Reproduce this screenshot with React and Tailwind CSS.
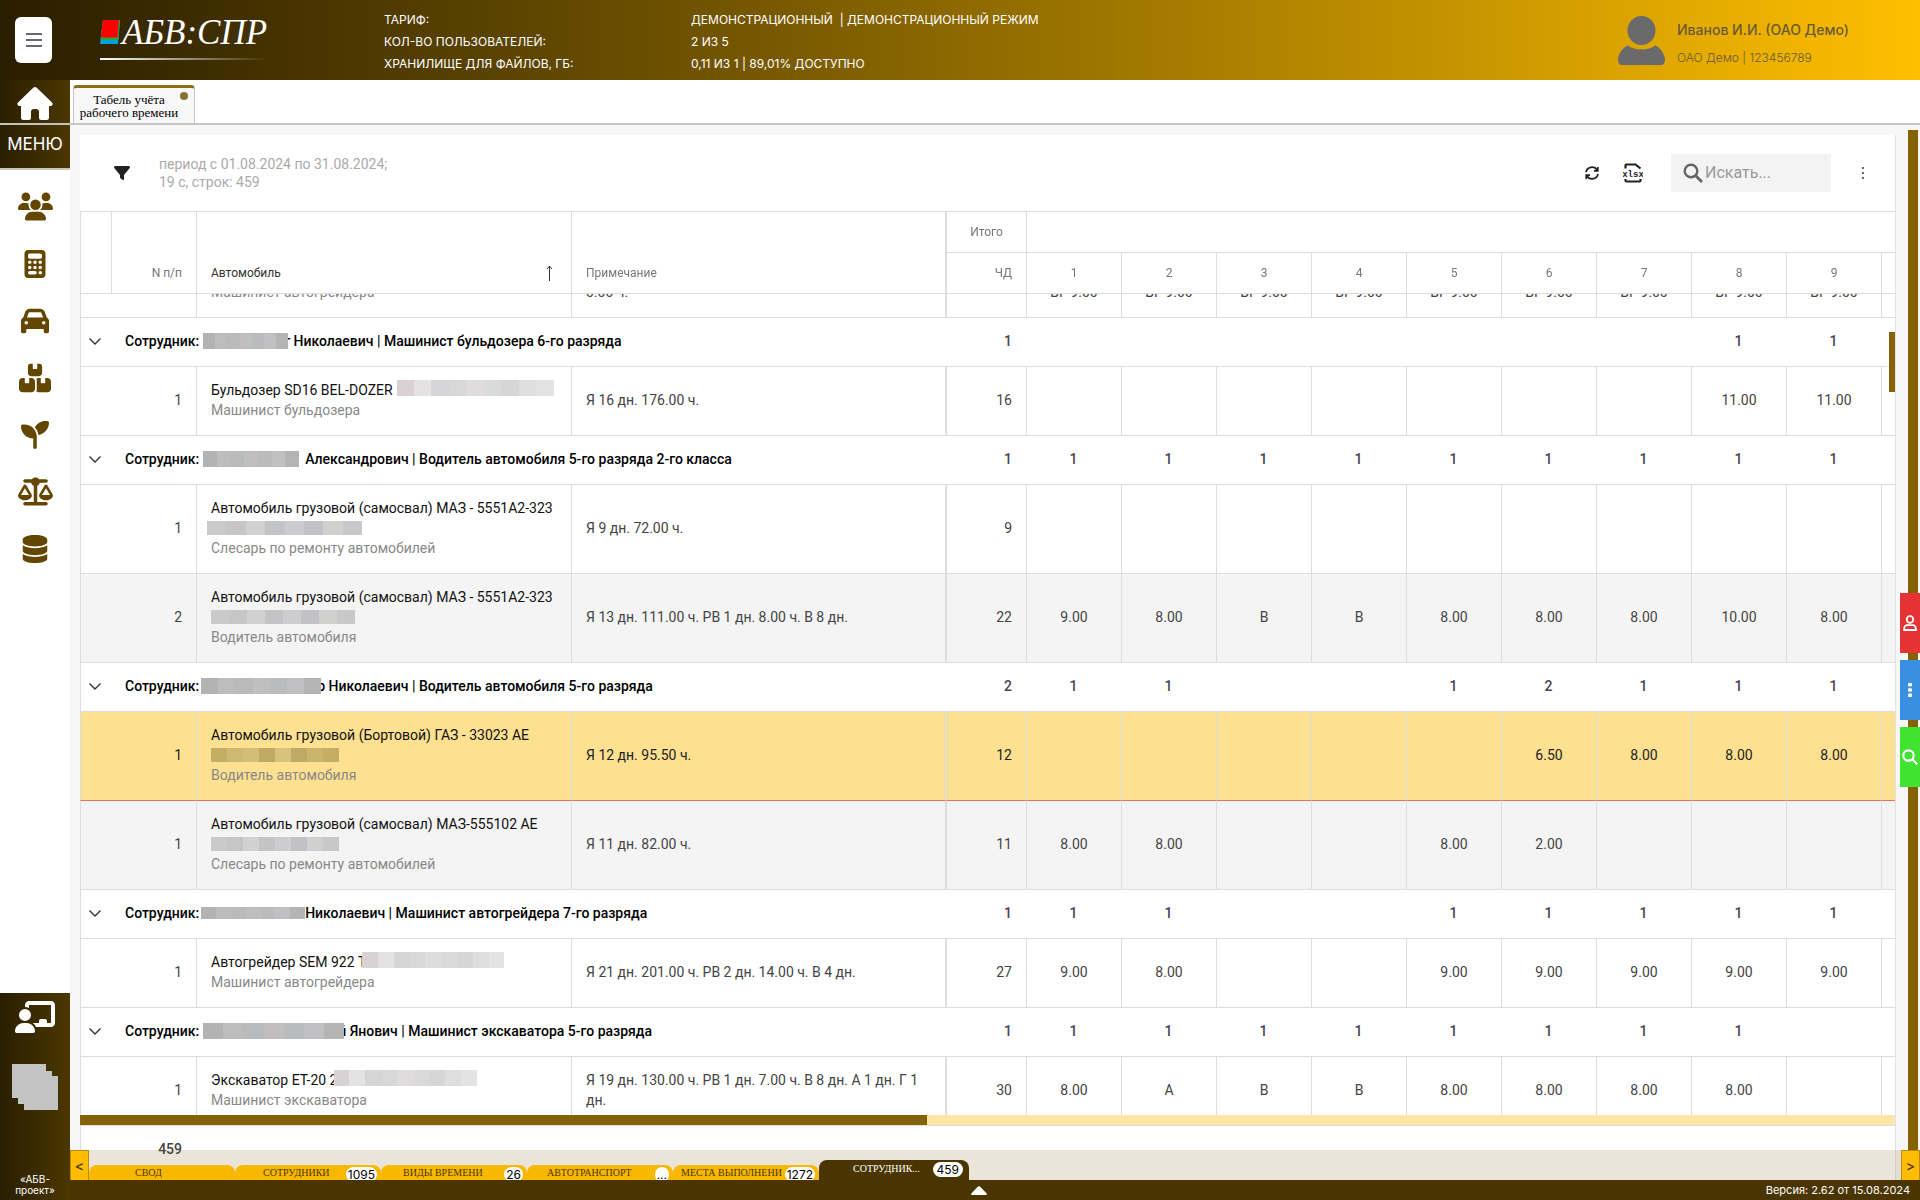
import { useLayoutEffect, useRef } from 'react';
import clsx from 'clsx';
import {
    FaBoxesStacked,
    FaCalculator,
    FaCar,
    FaChalkboardUser,
    FaDatabase,
    FaFilter,
    FaScaleBalanced,
    FaSeedling,
    FaUsers,
} from 'react-icons/fa6';

const MENU = [
    { title: 'Сотрудники', Icon: FaUsers, size: 35 },
    { title: 'Расчёты', Icon: FaCalculator, size: 28 },
    { title: 'Автотранспорт', Icon: FaCar, size: 28 },
    { title: 'Склад', Icon: FaBoxesStacked, size: 32 },
    { title: 'Растения', Icon: FaSeedling, size: 28 },
    { title: 'Баланс', Icon: FaScaleBalanced, size: 35 },
    { title: 'Справочники', Icon: FaDatabase, size: 28 },
];

const TARIFF = [
    ['ТАРИФ:', 'ДЕМОНСТРАЦИОННЫЙ \u00a0| ДЕМОНСТРАЦИОННЫЙ РЕЖИМ'],
    ['КОЛ-ВО ПОЛЬЗОВАТЕЛЕЙ:', '2 ИЗ 5'],
    ['ХРАНИЛИЩЕ ДЛЯ ФАЙЛОВ, ГБ:', '0,11 ИЗ 1 | 89,01% ДОСТУПНО'],
];

const DAYS = ['1', '2', '3', '4', '5', '6', '7', '8', '9'];

const GRAY = ['#b3b3b3', '#bdbdbd', '#b8babb', '#c1bebf', '#b9bbbc', '#c0bfc1', '#b4b4b4'];
const LIGHT = ['#d8d2d4', '#e4e2e3', '#d5d4d6', '#d8d8d9', '#e0dcde', '#dadadb', '#d6d5d8', '#dedede', '#e3e3e3'];
const MIDDLE = ['#cbcacb', '#c7c5c6', '#d2d1d2', '#c3c4c6', '#cdccce', '#c2c2c6', '#d0d0cf', '#c8c8ca'];
const SAND = ['#c4ae66', '#cfb972', '#d3be78', '#bfa963', '#d9c37c', '#bfaa65', '#cbb56d', '#c5ad65'];

const ROWS = [
    {
        type: 'row', n: '', car: '', post: 'Машинист автогрейдера', note: ['\u00a0', '0.00 ч.'], total: '',
        days: ['ВГ 9.00', 'ВГ 9.00', 'ВГ 9.00', 'ВГ 9.00', 'ВГ 9.00', 'ВГ 9.00', 'ВГ 9.00', 'ВГ 9.00', 'ВГ 9.00'],
        lowered: true,
    },
    {
        type: 'group', mosaic: 'w-[85px] h-4 ml-1 -mr-1', name: 'г Николаевич', post: 'Машинист бульдозера 6-го разряда',
        total: '1', days: ['', '', '', '', '', '', '', '1', '1'],
    },
    {
        type: 'row', n: '1', car: 'Бульдозер SD16 BEL-DOZER', inline: 'w-[157px] ml-1', post: 'Машинист бульдозера',
        note: ['Я 16 дн. 176.00 ч.'], total: '16', days: ['', '', '', '', '', '', '', '11.00', '11.00'],
    },
    {
        type: 'group', mosaic: 'w-24 h-4 ml-1 mr-1.5', name: 'Александрович', post: 'Водитель автомобиля 5-го разряда 2-го класса',
        total: '1', days: ['1', '1', '1', '1', '1', '1', '1', '1', '1'],
    },
    {
        type: 'row', tall: true, n: '1', car: 'Автомобиль грузовой (самосвал) МАЗ - 5551А2-323', below: 'w-[155px] -ml-1', colors: MIDDLE,
        post: 'Слесарь по ремонту автомобилей', note: ['Я 9 дн. 72.00 ч.'], total: '9', days: ['', '', '', '', '', '', '', '', ''],
    },
    {
        type: 'row', tall: true, odd: true, n: '2', car: 'Автомобиль грузовой (самосвал) МАЗ - 5551А2-323', below: 'w-36', colors: MIDDLE,
        post: 'Водитель автомобиля', note: ['Я 13 дн. 111.00 ч. РВ 1 дн. 8.00 ч. В 8 дн.'], total: '22',
        days: ['9.00', '8.00', 'В', 'В', '8.00', '8.00', '8.00', '10.00', '8.00'],
    },
    {
        type: 'group', mosaic: 'w-[120px] h-4 ml-0.5 -mr-1', name: 'р Николаевич', post: 'Водитель автомобиля 5-го разряда',
        total: '2', days: ['1', '1', '', '', '1', '2', '1', '1', '1'],
    },
    {
        type: 'row', tall: true, selected: true, n: '1', car: 'Автомобиль грузовой (Бортовой) ГАЗ - 33023 АЕ', below: 'w-32', colors: SAND,
        post: 'Водитель автомобиля', note: ['Я 12 дн. 95.50 ч.'], total: '12', days: ['', '', '', '', '', '6.50', '8.00', '8.00', '8.00'],
    },
    {
        type: 'row', tall: true, odd: true, afterSelected: true, n: '1', car: 'Автомобиль грузовой (самосвал) МАЗ-555102 АЕ', below: 'w-32', colors: MIDDLE,
        post: 'Слесарь по ремонту автомобилей', note: ['Я 11 дн. 82.00 ч.'], total: '11', days: ['8.00', '8.00', '', '', '8.00', '2.00', '', '', ''],
    },
    {
        type: 'group', mosaic: 'w-[104px] h-3 ml-0.5', name: 'Николаевич', post: 'Машинист автогрейдера 7-го разряда',
        total: '1', days: ['1', '1', '', '', '1', '1', '1', '1', '1'],
    },
    {
        type: 'row', n: '1', car: 'Автогрейдер SEM 922 Т', inline: 'w-[142px] -ml-1', post: 'Машинист автогрейдера',
        note: ['Я 21 дн. 201.00 ч. РВ 2 дн. 14.00 ч. В 4 дн.'], total: '27',
        days: ['9.00', '8.00', '', '', '9.00', '9.00', '9.00', '9.00', '9.00'],
    },
    {
        type: 'group', mosaic: 'w-[141px] h-4 ml-1 -mr-1.5', name: 'й Янович', post: 'Машинист экскаватора 5-го разряда',
        total: '1', days: ['1', '1', '1', '1', '1', '1', '1', '1', ''],
    },
    {
        type: 'row', n: '1', car: 'Экскаватор ЕТ-20 2', inline: 'w-[143px] -ml-1', post: 'Машинист экскаватора',
        note: ['Я 19 дн. 130.00 ч. РВ 1 дн. 7.00 ч. В 8 дн. А 1 дн. Г 1', 'дн.'], total: '30',
        days: ['8.00', 'А', 'В', 'В', '8.00', '8.00', '8.00', '8.00', ''],
    },
];

const SHEETS = [
    { title: 'СВОД', pad: 'pl-[46px]' },
    { title: 'СОТРУДНИКИ', count: '1095', pad: 'pl-7' },
    { title: 'ВИДЫ ВРЕМЕНИ', count: '26', pad: 'pl-[22px]' },
    { title: 'АВТОТРАНСПОРТ', count: '...', pad: 'pl-5' },
    { title: 'МЕСТА ВЫПОЛНЕНИ', count: '1272', pad: 'pl-2' },
];

function Mosaic({ className, colors }) {
    return (
        <span className={clsx('relative inline-flex shrink-0', className)}>
            {colors.map((color, i) => (
                <span key={i} className="flex-1" style={{ backgroundColor: color }} />
            ))}
        </span>
    );
}

function HouseIcon() {
    return (
        <svg width="36" height="33" viewBox="0 0 36 33" fill="#fff">
            <path d="M16 1a3 3 0 0 1 4 0L35 15.500c1.300 1.300.6 3.500-1.300 3.500H32v11.500a2.500 2.500 0 0 1-2.500 2.500H24a2 2 0 0 1-2-2v-6a3 3 0 0 0-3-3h-2a3 3 0 0 0-3 3v6a2 2 0 0 1-2 2H6.500A2.500 2.500 0 0 1 4 30.500V19H2.300C.4 19-.3 16.800 1 15.500z" />
        </svg>
    );
}

function Logo() {
    return (
        <a href="#" className="flex w-[170px] flex-col">
            <span className="flex h-[38px] items-start">
                <svg width="20" height="24" viewBox="0 0 20 24">
                    <path d="M3 0h17l-2 24H0z" fill="#00a3d9" />
                    <path d="M3 0h17l-1.600 20H.5z" fill="#22a83c" />
                    <path d="M3 0h16l-1.500 17.500H.8z" fill="#f00" />
                </svg>
                <span className="ml-0.5 font-['Liberation_Serif'] text-[35px] leading-[26px] text-white italic">АБВ:СПР</span>
            </span>
            <span className="h-0.5 bg-linear-to-r from-white to-transparent" />
        </a>
    );
}

function Header() {
    return (
        <header className="flex h-20 shrink-0 items-center bg-linear-to-r from-[#2a1e00] to-[#ffbf00] font-['Inter'] text-white">
            <button type="button" aria-label="Меню" className="ml-[15px] flex h-[46px] w-[37px] flex-col items-center justify-center gap-1 rounded-md bg-white">
                <span className="h-0.5 w-4 bg-[#666a70]" />
                <span className="h-0.5 w-4 bg-[#666a70]" />
                <span className="h-0.5 w-4 bg-[#666a70]" />
            </button>
            <div className="ml-12">
                <Logo />
            </div>
            <dl className="ml-[114px] pt-1 text-xs leading-[22px]">
                {TARIFF.map(([label, value]) => (
                    <div key={label} className="flex">
                        <dt className="w-[307px]">{label}</dt>
                        <dd>{value}</dd>
                    </div>
                ))}
            </dl>
            <div className="mr-[67px] ml-auto flex items-center gap-3 text-[#6b5a34]">
                <svg width="47" height="49" viewBox="0 0 47 49" fill="#6a6a6a">
                    <ellipse cx="23.500" cy="14.500" rx="14" ry="14.500" />
                    <path d="M10 29.500c3 2.500 8 4 13.500 4s10.500-1.500 13.500-4c6 2.500 10 9 10 14.500 0 3-1.500 5-4.500 5h-38C1.500 49 0 47 0 44c0-5.500 4-12 10-14.500z" />
                </svg>
                <div className="w-44 pt-2">
                    <p className="text-sm leading-7 font-medium">Иванов И.И. (ОАО Демо)</p>
                    <p className="text-xs leading-7 font-light">ОАО Демо | 123456789</p>
                </div>
            </div>
        </header>
    );
}

function Sidebar() {
    return (
        <aside className="flex w-[70px] shrink-0 flex-col bg-white font-['Inter']">
            <a href="#" aria-label="На главную" className="flex h-[45px] items-center justify-center border-b-2 border-[#c5c2bb] bg-linear-to-r from-[#2a1e00] to-[#4c3800] pt-1">
                <HouseIcon />
            </a>
            <button type="button" className="h-[45px] border-b-2 border-[#c9c5bd] bg-linear-to-r from-[#2a1e00] to-[#4c3800] pb-1 text-[17px] text-white">
                МЕНЮ
            </button>
            <nav className="mt-2 flex flex-col">
                {MENU.map(({ title, Icon, size }) => (
                    <a key={title} href="#" aria-label={title} className="flex h-[57px] items-center justify-center text-[#634600]">
                        <Icon size={size} />
                    </a>
                ))}
            </nav>
            <div className="mt-auto flex h-[207px] flex-col items-center bg-linear-to-r from-[#2a1e00] to-[#4c3800] text-white">
                <FaChalkboardUser size={40} className="mt-1" />
                <svg width="46" height="46" viewBox="0 0 46 46" fill="#c3c3c3" className="mt-[27px]">
                    <path d="M0 0h34v7h6v5h6v34H12v-6H6v-6H0z" />
                </svg>
                <p className="mt-auto mb-1 text-center text-[10px] leading-[11px]">
                    «АБВ-
                    <br />
                    проект»
                </p>
            </div>
        </aside>
    );
}

function TabBar() {
    return (
        <div className="flex h-[45px] shrink-0 items-end border-b-2 border-[#c5c5c5] bg-white pl-[3px]">
            <button type="button" className="relative h-[38px] w-[122px] rounded-t border border-t-[3px] border-b-0 border-[#c5c5c5] border-t-[#8c7014] bg-[#f8f8f8] pr-2.5 text-center font-['Liberation_Serif'] text-[13px] leading-[13px]">
                Табель учёта
                <br />
                рабочего времени
                <span className="absolute top-1 right-1.5 size-2 rounded-full bg-[#8c7030]" />
            </button>
        </div>
    );
}

function Toolbar() {
    return (
        <div className="flex h-[76px] shrink-0 items-center text-[#222]">
            <button type="button" aria-label="Фильтр" className="ml-[34px]">
                <FaFilter size={16} />
            </button>
            <p className="ml-[29px] text-sm leading-[18px] text-[#aaa]">
                период с 01.08.2024 по 31.08.2024;
                <br />
                19 с, строк: 459
            </p>
            <button type="button" aria-label="Обновить" className="ml-auto">
                <svg width="14" height="14" viewBox="0 0 14 14" fill="none" stroke="currentColor" strokeWidth="1.700">
                    <path d="M1 6.200A6 6 0 0 1 12 4M13 7.800A6 6 0 0 1 2 10" />
                    <path d="M12.800 1v3.800H9M1.200 13V9.200H5" />
                </svg>
            </button>
            <button type="button" aria-label="Выгрузить в xlsx" className="ml-6">
                <svg width="20" height="20" viewBox="0 0 20 20">
                    <path d="M2.500 5.500V2.500q0-1 1-1h9L17.500 5.500M2.500 16v1.500q0 1 1 1h13q1 0 1-1V16" fill="none" stroke="currentColor" strokeWidth="2.200" />
                    <text x="10" y="13.500" textAnchor="middle" fontFamily="Liberation Mono" fontSize="9" fontWeight="700" fill="currentColor">xlsx</text>
                </svg>
            </button>
            <label className="ml-7 flex h-[38px] w-40 items-center bg-[#f3f3f3] pl-3">
                <svg width="20" height="20" viewBox="0 0 20 20" fill="none" stroke="#666" strokeWidth="2.400">
                    <circle cx="8" cy="8" r="6.300" />
                    <path d="M12.500 12.500l6.500 6.500" strokeWidth="2.800" />
                </svg>
                <input type="search" aria-label="Искать" placeholder="Искать..." className="ml-0.5 w-28 bg-transparent text-base outline-none placeholder:text-[#999]" />
            </label>
            <button type="button" aria-label="Ещё" className="mr-7 ml-7">
                <svg width="8" height="14" viewBox="0 0 8 14" fill="#444">
                    <circle cx="4" cy="2" r="1.100" />
                    <circle cx="4" cy="7" r="1.100" />
                    <circle cx="4" cy="12" r="1.100" />
                </svg>
            </button>
        </div>
    );
}

function TableHead() {
    const cell = 'border-l border-t border-[#ddd] bg-white font-normal';
    const last = 'border-b pb-3 align-bottom';
    return (
        <thead className="sticky top-0 z-10 text-xs text-[#777]">
            <tr className="h-[41px]">
                <th rowSpan={2} className={clsx(cell, last)} />
                <th rowSpan={2} className={clsx(cell, last, 'pr-3.5 text-right')}>N п/п</th>
                <th rowSpan={2} className={clsx(cell, last, 'px-3.5 text-left text-[#333]')}>
                    <span className="flex items-center justify-between">
                        Автомобиль
                        <svg width="16" height="16" viewBox="0 0 16 16" fill="none" stroke="#333">
                            <path d="M8.500 16V1M6 4l2.500-3L11 4" />
                        </svg>
                    </span>
                </th>
                <th rowSpan={2} className={clsx(cell, last, 'px-3.5 text-left')}>Примечание</th>
                <th className={clsx(cell, 'border-l-2')}>Итого</th>
                <th colSpan={10} className={cell} />
            </tr>
            <tr className="h-[42px]">
                <th className={clsx(cell, 'border-b border-l-2 pr-3.5 text-right')}>ЧД</th>
                {DAYS.map((day) => (
                    <th key={day} className={clsx(cell, 'border-b')}>{day}</th>
                ))}
                <th className={clsx(cell, 'border-b')} />
            </tr>
        </thead>
    );
}

function GroupRow({ row }) {
    const cell = 'border-t border-[#ddd] pb-0.5';
    return (
        <tr className="h-[49px] bg-white font-medium text-[#4a4252]">
            <td className={clsx(cell, 'border-l')}>
                <button type="button" aria-label="Свернуть" className="flex w-full justify-center pr-0.5">
                    <svg width="12" height="8" viewBox="0 0 12 8" fill="none" stroke="#333" strokeWidth="1.400">
                        <path d="M.5 1.500L6 7l5.500-5.500" />
                    </svg>
                </button>
            </td>
            <td colSpan={3} className={clsx(cell, 'pl-3.5 text-black')}>
                <div className="flex items-center whitespace-nowrap">
                    Сотрудник:
                    <Mosaic className={row.mosaic} colors={GRAY} />
                    {row.name} | {row.post}
                </div>
            </td>
            <td className={clsx(cell, 'pr-3.5 text-right')}>{row.total}</td>
            {row.days.map((value, i) => (
                <td key={i} className={clsx(cell, 'text-center')}>{value}</td>
            ))}
            <td className={cell} />
        </tr>
    );
}

function CarRow({ row }) {
    const cell = clsx('border-t border-l border-[#ddd] pb-0.5', row.afterSelected && 'border-t-[#e07060]');
    const bg = row.selected ? 'bg-[#fee091] text-[#222]' : row.odd ? 'bg-[#f4f4f4] text-[#444]' : 'bg-white text-[#444]';
    return (
        <tr className={clsx(bg, row.tall ? 'h-[89px]' : 'h-[69px]')}>
            <td className={cell} />
            <td className={clsx(cell, 'border-l-0 pr-3.5 text-right')}>{row.n}</td>
            <td className={clsx(cell, 'px-3.5 whitespace-nowrap')}>
                <div className="flex h-5 text-[#111]">
                    {row.car}
                    {row.inline && <Mosaic className={clsx('h-4', row.inline)} colors={LIGHT} />}
                </div>
                {row.below && (
                    <div className="flex h-5 items-center">
                        <Mosaic className={clsx('h-[14px]', row.below)} colors={row.colors} />
                    </div>
                )}
                <div className="text-[#888]">{row.post}</div>
            </td>
            <td className={clsx(cell, 'px-3.5')}>
                {row.note.map((line) => (
                    <div key={line} className="whitespace-nowrap">{line}</div>
                ))}
            </td>
            <td className={clsx(cell, 'border-l-2 pr-3.5 text-right')}>{row.total}</td>
            {row.days.map((value, i) => (
                <td key={i} className={clsx(cell, 'text-center', row.lowered && 'pt-5')}>{value}</td>
            ))}
            <td className={cell} />
        </tr>
    );
}

function TimeSheet() {
    const box = useRef(null);

    useLayoutEffect(() => {
        box.current.scrollTop = 46;
    }, []);

    return (
        <div className="relative min-h-0 flex-1">
            <div ref={box} className="h-full overflow-hidden">
                <table className="w-full table-fixed border-separate border-spacing-0 text-sm leading-5">
                    <colgroup>
                        <col className="w-[31px]" />
                        <col className="w-[85px]" />
                        <col className="w-[375px]" />
                        <col className="w-[374px]" />
                        <col className="w-[81px]" />
                        {DAYS.map((day) => (
                            <col key={day} className="w-[95px]" />
                        ))}
                        <col />
                    </colgroup>
                    <TableHead />
                    <tbody>
                        {ROWS.map((row, i) => (row.type === 'group' ? <GroupRow key={i} row={row} /> : <CarRow key={i} row={row} />))}
                    </tbody>
                </table>
            </div>
            <div className="absolute top-[121px] right-0 h-[60px] w-1.5 bg-[#856206]" />
        </div>
    );
}

function SheetTabs() {
    const arrow = "h-[30px] w-[19px] shrink-0 border border-b-0 border-[#b88a10] bg-[#ffbc00] font-['Inter'] text-sm font-medium text-[#4a3500]";
    const badge = "h-[15px] shrink-0 rounded-lg bg-white font-['Inter'] text-xs leading-[15px] text-black";
    return (
        <div className="absolute inset-x-0 bottom-0 z-20 flex h-[30px] items-end overflow-hidden bg-[#764a00]/15 font-['Liberation_Serif'] text-[10px]">
            <button type="button" aria-label="Назад" className={arrow}>&lt;</button>
            {SHEETS.map((sheet) => (
                <button key={sheet.title} type="button" className={clsx('flex h-[15px] w-[146px] items-start justify-between rounded-t-lg bg-[#f9b800] pr-1 text-[#4a3500]', sheet.pad)}>
                    <span className="leading-4 whitespace-nowrap">{sheet.title}</span>
                    {sheet.count && <span className={clsx(badge, 'mt-0.5 px-0.5')}>{sheet.count}</span>}
                </button>
            ))}
            <button type="button" className="flex h-5 w-[150px] items-start justify-between rounded-t-lg bg-[#4a3500] pt-0.5 pr-1.5 pl-[34px] text-white">
                <span className="leading-[13px]">СОТРУДНИК...</span>
                <span className={clsx(badge, 'px-1')}>459</span>
            </button>
            <button type="button" aria-label="Вперёд" className={clsx(arrow, 'ml-auto')}>&gt;</button>
        </div>
    );
}

function SideButtons() {
    return (
        <div className="absolute top-[468px] right-0 z-20 flex flex-col gap-[7px]">
            <button type="button" aria-label="Пользователь" className="flex h-[60px] w-5 items-center justify-center bg-[#e53334]">
                <svg width="14" height="16" viewBox="0 0 14 16" fill="none" stroke="#fff" strokeWidth="1.800">
                    <circle cx="7" cy="4.500" r="3.300" />
                    <path d="M1 15c0-3 1.500-4.800 3.500-4.800h5C11.500 10.200 13 12 13 15z" />
                </svg>
            </button>
            <button type="button" aria-label="Действия" className="flex h-[60px] w-5 items-center justify-center bg-[#3990e2]">
                <svg width="4" height="14" viewBox="0 0 4 14" fill="#fff">
                    <rect width="4" height="3.500" rx="1" />
                    <rect y="5.200" width="4" height="3.500" rx="1" />
                    <rect y="10.400" width="4" height="3.500" rx="1" />
                </svg>
            </button>
            <button type="button" aria-label="Поиск" className="flex h-[60px] w-5 items-center justify-center bg-[#42e232]">
                <svg width="16" height="16" viewBox="0 0 16 16" fill="none" stroke="#fff" strokeWidth="2.200">
                    <circle cx="6.500" cy="6.500" r="5.200" />
                    <path d="M10.300 10.300l5 5" />
                </svg>
            </button>
        </div>
    );
}

export default function App() {
    return (
        <div className="flex h-screen flex-col overflow-hidden bg-[#f7f7f7] font-['Roboto',sans-serif]">
            <Header />
            <div className="flex min-h-0 flex-1">
                <Sidebar />
                <main className="flex min-w-0 flex-1 flex-col">
                    <TabBar />
                    <div className="relative flex min-h-0 flex-1 pl-2.5">
                        <section className="mt-2.5 flex min-w-0 flex-1 flex-col border-r border-[#e2e2e2] bg-white">
                            <Toolbar />
                            <TimeSheet />
                            <div className="h-[11px] shrink-0 border-b border-[#ddd] bg-[#ffe6a6]">
                                <div className="h-full w-[847px] bg-[#846206]" />
                            </div>
                            <div className="h-[54px] shrink-0 border-l border-[#ddd]">
                                <p className="w-[101px] text-right text-sm leading-[46px] font-medium text-[#444]">459</p>
                            </div>
                        </section>
                        <div className="w-6 shrink-0 pt-[5px]">
                            <div className="ml-3 h-full w-2.5 bg-[#856200]" />
                        </div>
                        <SideButtons />
                        <SheetTabs />
                    </div>
                    <footer className="grid h-5 shrink-0 grid-cols-[1fr_auto_1fr] items-center bg-[#4a3500] font-['Inter'] text-[11px] text-white">
                        <span />
                        <button type="button" aria-label="Развернуть" className="mr-8">
                            <svg width="16" height="9" viewBox="0 0 16 9" fill="#fff">
                                <path d="M7 .6a1.500 1.500 0 0 1 2 0l6.500 6.600c.8.800.3 1.800-.8 1.800H1.300C.2 9-.3 8 .5 7.200z" />
                            </svg>
                        </button>
                        <span className="pr-2.5 text-right">Версия: 2.62 от 15.08.2024</span>
                    </footer>
                </main>
            </div>
        </div>
    );
}
